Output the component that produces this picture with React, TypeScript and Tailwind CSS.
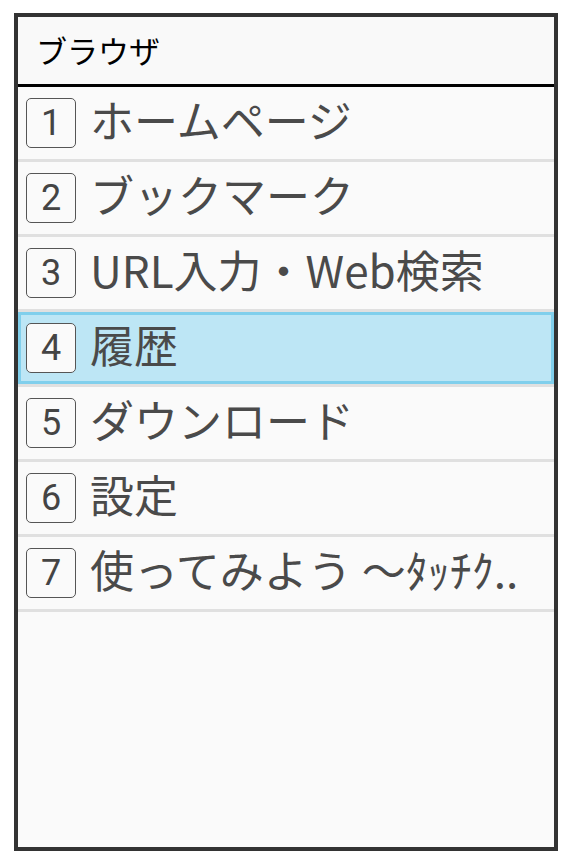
import React from "react";

const items = [
  { n: "1", label: "ホームページ" },
  { n: "2", label: "ブックマーク" },
  { n: "3", label: "URL入力・Web検索" },
  { n: "4", label: "履歴", selected: true },
  { n: "5", label: "ダウンロード" },
  { n: "6", label: "設定" },
  { n: "7", label: "使ってみよう ～ﾀｯﾁｸ.." },
];

const MenuRow = ({ n, label, selected }: { n: string; label: string; selected?: boolean }) => {
  return (
    <div className="border-b-[3px] border-[#e0e0e0]">
      <div
        className={
          selected
            ? "h-[72px] flex items-center pl-[5px] border-[3px] border-[#80cfec] bg-[#bde6f5]"
            : "h-[72px] flex items-center pl-[5px] border-[3px] border-transparent"
        }
      >
        <div className="w-[50px] h-[50px] shrink-0 rounded-[5px] border border-[#555] bg-[#fafafa] flex items-center justify-center text-[36px] leading-none text-[#444] font-['Roboto',sans-serif]">
          {n}
        </div>
        <span className="ml-[14px] mb-[8px] whitespace-nowrap text-[44px] leading-[1.25] text-[#4a4a4a] font-['Noto_Sans_CJK_JP',sans-serif]">
          {label}
        </span>
      </div>
    </div>
  );
};

const App = () => {
  return (
    <div className="w-[570px] h-[864px] bg-white pt-[13px] pl-[14px]">
      <div className="w-[544px] h-[838px] border-4 border-[#333] bg-[#fafafa] flex flex-col overflow-hidden">
        <div className="h-[70px] shrink-0 flex items-center pl-[18px] border-b-[3px] border-black bg-[#f9f9f9]">
          <span className="text-[31px] leading-[1.25] text-black font-['Noto_Sans_CJK_JP',sans-serif]">ブラウザ</span>
        </div>
        {items.map((it) => (
          <MenuRow key={it.n} n={it.n} label={it.label} selected={it.selected} />
        ))}
      </div>
    </div>
  );
};

export default App;
